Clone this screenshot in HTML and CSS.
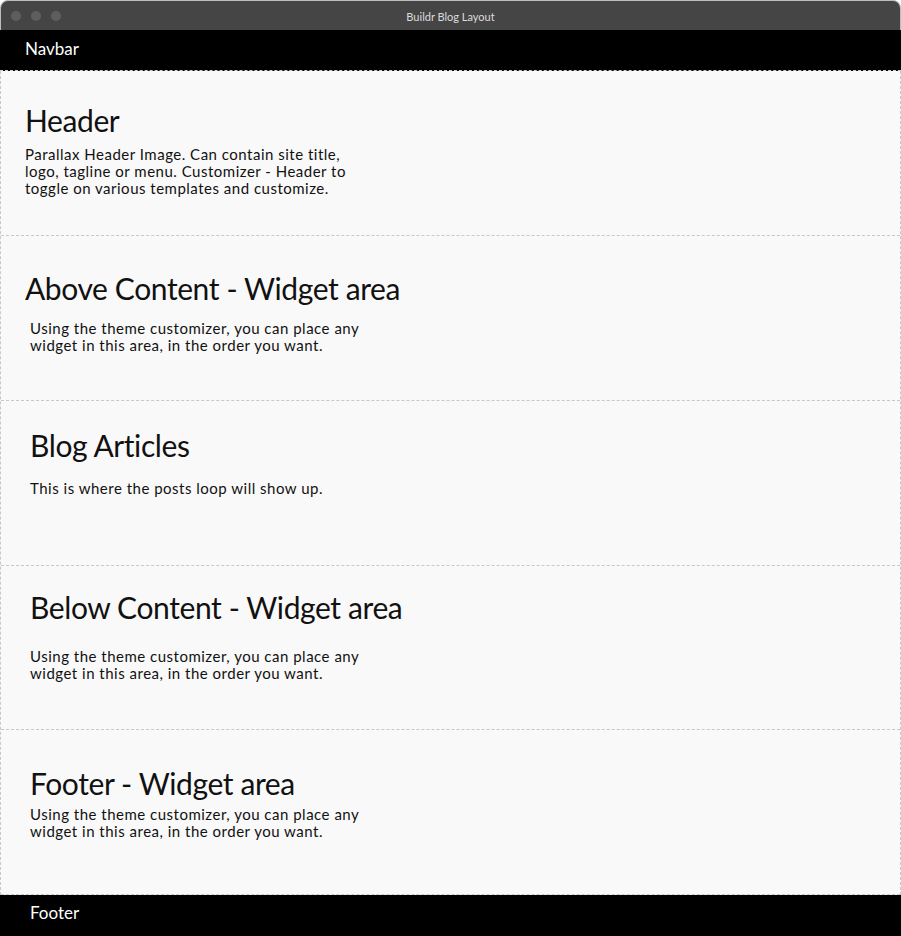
FILE: index.html
```html
<!DOCTYPE html>
<html lang="en">

<head>
    <meta charset="UTF-8">
    <meta name="viewport" content="width=device-width, initial-scale=1.0">
    <title>Buildr Blog Layout</title>
    <link rel="stylesheet" href="styles.css">
</head>

<body>
    <div class="window">
        <div class="titlebar">
            <div class="dots"><span></span><span></span><span></span></div>
            <div class="title">Buildr Blog Layout</div>
            <div></div>
        </div>

        <nav class="navbar">Navbar</nav>

        <main class="content">
            <section class="block block-header">
                <h2>Header</h2>
                <p>Parallax Header Image. Can contain site title,<br>
                    logo, tagline or menu. Customizer - Header to<br>
                    toggle on various templates and customize.</p>
            </section>

            <section class="block block-above">
                <h2>Above Content - Widget area</h2>
                <p>Using the theme customizer, you can place any<br>
                    widget in this area, in the order you want.</p>
            </section>

            <section class="block block-articles">
                <h2>Blog Articles</h2>
                <p>This is where the posts loop will show up.</p>
            </section>

            <section class="block block-below">
                <h2>Below Content - Widget area</h2>
                <p>Using the theme customizer, you can place any<br>
                    widget in this area, in the order you want.</p>
            </section>

            <section class="block block-footer">
                <h2>Footer - Widget area</h2>
                <p>Using the theme customizer, you can place any<br>
                    widget in this area, in the order you want.</p>
            </section>
        </main>

        <footer class="footer">Footer</footer>
    </div>
</body>

</html>
```

FILE: styles.css
```css
/* Basic Reset */
* {
    margin: 0;
    padding: 0;
    box-sizing: border-box;
}

body {
    font-family: 'Lato', 'Liberation Sans', sans-serif;
    background: #fff;
    color: #111;
}

.window {
    width: 901px;
    height: 936px;
    overflow: hidden;
}

/* Title bar */
.titlebar {
    display: grid;
    grid-template-columns: 1fr auto 1fr;
    align-items: center;
    height: 30px;
    background: #454545;
    border: 1px solid #bdbdbd;
    border-bottom: none;
    border-radius: 8px 8px 0 0;
}

.dots {
    display: flex;
    gap: 10px;
    padding-left: 10px;
}

.dots span {
    width: 10px;
    height: 10px;
    border-radius: 50%;
    background: #5e5e5e;
}

.title {
    font-size: 11px;
    color: #dcdcdc;
    padding-top: 1px;
}

/* Navbar */
.navbar {
    height: 41px;
    line-height: 37px;
    padding-left: 25px;
    background: #000;
    color: #fff;
    font-size: 17px;
    border-bottom: 1px dashed #d0d0d0;
}

/* Content blocks */
.content {
    background: #f9f9f9;
    border-left: 1px dashed #c8c8c8;
    border-right: 1px dashed #c8c8c8;
}

.block {
    height: 165px;
    padding: 0 24px;
    border-top: 1px dashed #c8c8c8;
}

.block h2 {
    font-size: 30px;
    font-weight: 400;
    line-height: 1;
    letter-spacing: -0.4px;
}

.block p {
    font-size: 15px;
    line-height: 17px;
    letter-spacing: 0.5px;
}

.block-header {
    height: 164px;
    padding-top: 34px;
    border-top: none;
}

.block-header p {
    margin-top: 11px;
}

.block-above {
    padding-top: 37px;
}

.block-above p {
    margin-top: 17px;
    padding-left: 5px;
}

.block-articles {
    padding: 29px 29px 0;
}

.block-articles p {
    margin-top: 20px;
}

.block-below {
    height: 164px;
    padding: 26px 29px 0;
}

.block-below p {
    margin-top: 26px;
}

.block-footer {
    height: 166px;
    padding: 38px 29px 0;
    border-bottom: 1px dashed #c8c8c8;
}

.block-footer p {
    margin-top: 8px;
}

/* Footer */
.footer {
    height: 41px;
    line-height: 35px;
    padding-left: 30px;
    background: #000;
    color: #fff;
    font-size: 17px;
}
```
